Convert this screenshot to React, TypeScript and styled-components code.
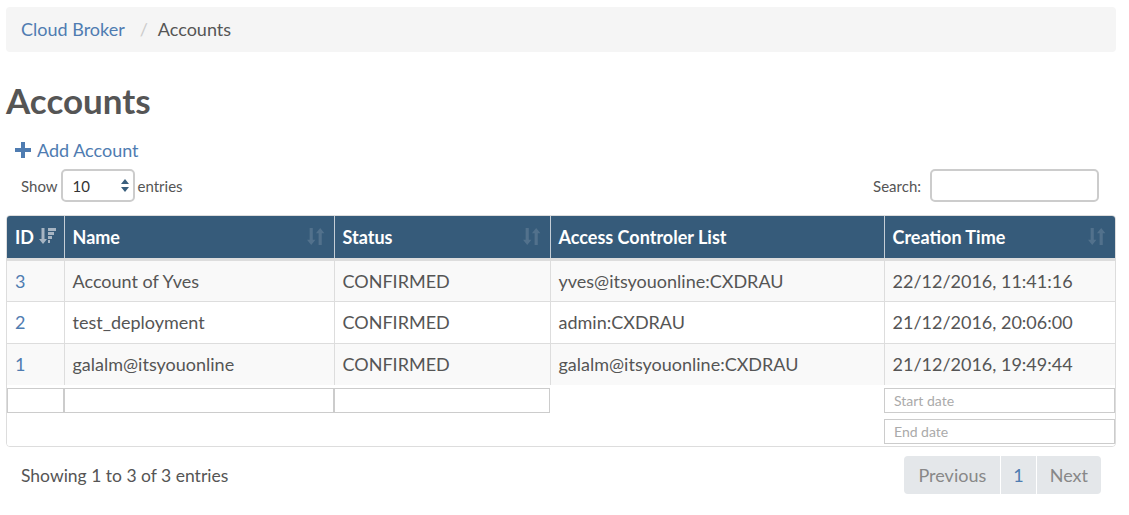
import styled, { createGlobalStyle } from 'styled-components';

const GlobalStyle = createGlobalStyle`
    body {
        margin: 0;
        font-family: Lato, "Open Sans", "Liberation Sans", sans-serif;
        color: #555;
        background: #fff;
    }
    * {
        box-sizing: border-box;
    }
`

const accounts = [
    { id: 3, name: 'Account of Yves', status: 'CONFIRMED', acl: 'yves@itsyouonline:CXDRAU', created: '22/12/2016, 11:41:16' },
    { id: 2, name: 'test_deployment', status: 'CONFIRMED', acl: 'admin:CXDRAU', created: '21/12/2016, 20:06:00' },
    { id: 1, name: 'galalm@itsyouonline', status: 'CONFIRMED', acl: 'galalm@itsyouonline:CXDRAU', created: '21/12/2016, 19:49:44' },
];

const columns = [
    { key: 'id', label: 'ID', width: 57, active: true },
    { key: 'name', label: 'Name', width: 270 },
    { key: 'status', label: 'Status', width: 216 },
    { key: 'acl', label: 'Access Controler List', width: 334, noSort: true },
    { key: 'created', label: 'Creation Time', width: 231 },
];

function SortIcon() {
    return (
        <svg width="19" height="19" viewBox="0 0 18 18">
            <path d="M2.5 1h3v11h2.5l-4 5-4-5h2.5z" fill="currentColor" />
            <path d="M12.5 1l4 5h-2.5v11h-3V6H8.5z" fill="currentColor" />
        </svg>
    )
}

function SortDescIcon() {
    return (
        <svg width="17" height="17" viewBox="0 0 17 17">
            <path d="M2.5 0h3v11h2.5l-4 5-4-5h2.5z" fill="currentColor" />
            <rect x="9" y="0" width="8" height="3" fill="currentColor" />
            <rect x="9" y="4" width="6" height="3" fill="currentColor" />
            <rect x="9" y="8" width="4" height="3" fill="currentColor" />
            <rect x="9" y="12" width="2" height="3" fill="currentColor" />
        </svg>
    )
}

export default function App() {
    return (
        <Page>
            <GlobalStyle />
            <Breadcrumb>
                <a>Cloud Broker</a>
                <span className="sep">/</span>
                <span>Accounts</span>
            </Breadcrumb>

            <Title>Accounts</Title>

            <AddLink>
                <svg width="16" height="16" viewBox="0 0 16 16">
                    <path d="M6 0h4v6h6v4h-6v6H6v-6H0V6h6z" fill="currentColor" />
                </svg>
                Add Account
            </AddLink>

            <Controls>
                <label>
                    Show
                    <SelectBox>
                        10
                        <svg width="8" height="13" viewBox="0 0 8 13">
                            <path d="M4 0l4 5H0z M4 13L0 8h8z" fill="currentColor" />
                        </svg>
                    </SelectBox>
                    entries
                </label>
                <label>
                    Search:
                    <SearchInput />
                </label>
            </Controls>

            <TableWrap>
                <Table>
                    <colgroup>
                        {columns.map(c => <col key={c.key} style={{ width: c.width }} />)}
                    </colgroup>
                    <thead>
                        <tr>
                            {columns.map(c => (
                                <HeadCell key={c.key}>
                                    <div className="inner">
                                        <span>{c.label}</span>
                                        {c.active ? (
                                            <ActiveSort><SortDescIcon /></ActiveSort>
                                        ) : !c.noSort && (
                                            <IdleSort><SortIcon /></IdleSort>
                                        )}
                                    </div>
                                </HeadCell>
                            ))}
                        </tr>
                    </thead>
                    <tbody>
                        {accounts.map((a, idx) => (
                            <Row key={a.id} striped={idx % 2 === 0}>
                                <td><a>{a.id}</a></td>
                                <td>{a.name}</td>
                                <td>{a.status}</td>
                                <td>{a.acl}</td>
                                <td>{a.created}</td>
                            </Row>
                        ))}
                    </tbody>
                    <tfoot>
                        <tr>
                            <FilterCell><FilterInput /></FilterCell>
                            <FilterCell><FilterInput /></FilterCell>
                            <FilterCell><FilterInput /></FilterCell>
                            <FilterCell />
                            <FilterCell>
                                <FilterInput placeholder="Start date" />
                                <FilterInput placeholder="End date" className="second" />
                            </FilterCell>
                        </tr>
                    </tfoot>
                </Table>
            </TableWrap>

            <Footer>
                <span>Showing 1 to 3 of 3 entries</span>
                <Pager>
                    <PageButton pad={14}>Previous</PageButton>
                    <PageButton pad={12} current>1</PageButton>
                    <PageButton pad={13}>Next</PageButton>
                </Pager>
            </Footer>
        </Page>
    )
}

const Page = styled.div`
    padding: 7px 13px 0 6px;
`

const Breadcrumb = styled.nav`
    height: 45px;
    padding: 10px 15px;
    background: #f5f5f5;
    border-radius: 4px;
    font-size: 18px;
    line-height: 25px;
    color: #555;

    a {
        color: #4f7cb1;
    }

    .sep {
        color: #ccc;
        padding: 0 10px 0 15px;
    }
`

const Title = styled.h1`
    margin: 28px 0 0;
    font-size: 35px;
    line-height: 40px;
    font-weight: 700;
    color: #555;
`

const AddLink = styled.a`
    display: flex;
    align-items: center;
    gap: 6px;
    margin: 17px 0 0 9px;
    height: 25px;
    font-size: 18px;
    color: #4f7cb1;
`

const Controls = styled.div`
    display: flex;
    justify-content: space-between;
    align-items: center;
    margin-top: 7px;
    padding: 0 17px 0 15px;
    font-size: 15px;

    label {
        display: flex;
        align-items: center;
        gap: 3px;
    }
`

const SelectBox = styled.div`
    display: flex;
    align-items: center;
    justify-content: space-between;
    width: 74px;
    height: 33px;
    padding: 0 4px 0 10px;
    border: 2px solid #ccc;
    border-radius: 5px;
    font-size: 15px;
    color: #333;

    svg {
        color: #3a5f7d;
    }
`

const SearchInput = styled.input`
    width: 169px;
    height: 33px;
    margin-left: 6px;
    border: 2px solid #ccc;
    border-radius: 5px;
`

const TableWrap = styled.div`
    margin-top: 13px;
    border: 1px solid #ddd;
    border-radius: 4px;
    overflow: hidden;
`

const Table = styled.table`
    width: 100%;
    border-collapse: collapse;
    table-layout: fixed;
    font-size: 18px;
`

const HeadCell = styled.th`
    height: 43px;
    padding: 0 8px;
    background: #365b7a;
    color: #fff;
    text-align: left;
    font-weight: 700;
    border-left: 1px solid #c5ced6;
    border-bottom: 3px solid #ddd;

    &:first-child {
        border-left: none;
    }

    .inner {
        display: flex;
        align-items: center;
        justify-content: space-between;
    }
`

const ActiveSort = styled.span`
    display: flex;
    color: #a7b5c3;
    margin-left: 2px;
`

const IdleSort = styled.span`
    display: flex;
    color: #52718c;
`

const Row = styled.tr<{ striped: boolean }>`
    background: ${p => p.striped ? '#f9f9f9' : '#fff'};

    td {
        height: 42px;
        padding: 0 8px;
        border-top: 1px solid #ddd;
        border-left: 1px solid #ddd;
        white-space: nowrap;
    }

    td:first-child {
        border-left: none;
    }

    a {
        color: #4f7cb1;
    }
`

const FilterCell = styled.td`
    padding: 3px 0 2px;
    vertical-align: top;
    background: #fff;
`

const FilterInput = styled.input`
    display: block;
    width: 100%;
    height: 25px;
    padding: 0 9px;
    border: 1px solid #ccc;
    font-family: inherit;
    font-size: 14px;
    color: #555;

    &::placeholder {
        color: #aaa;
    }

    &.second {
        margin-top: 6px;
    }
`

const Footer = styled.div`
    display: flex;
    justify-content: space-between;
    align-items: center;
    margin-top: 9px;
    padding: 0 15px;
    font-size: 17.5px;
`

const Pager = styled.div`
    display: flex;
    gap: 1px;
    border-radius: 4px;
    overflow: hidden;
`

const PageButton = styled.span<{ current?: boolean; pad: number }>`
    height: 38px;
    line-height: 38px;
    padding: 0 ${p => p.pad}px;
    background: #e4e7ea;
    font-size: 18px;
    color: ${p => p.current ? '#4f7cb1' : '#888'};
`
